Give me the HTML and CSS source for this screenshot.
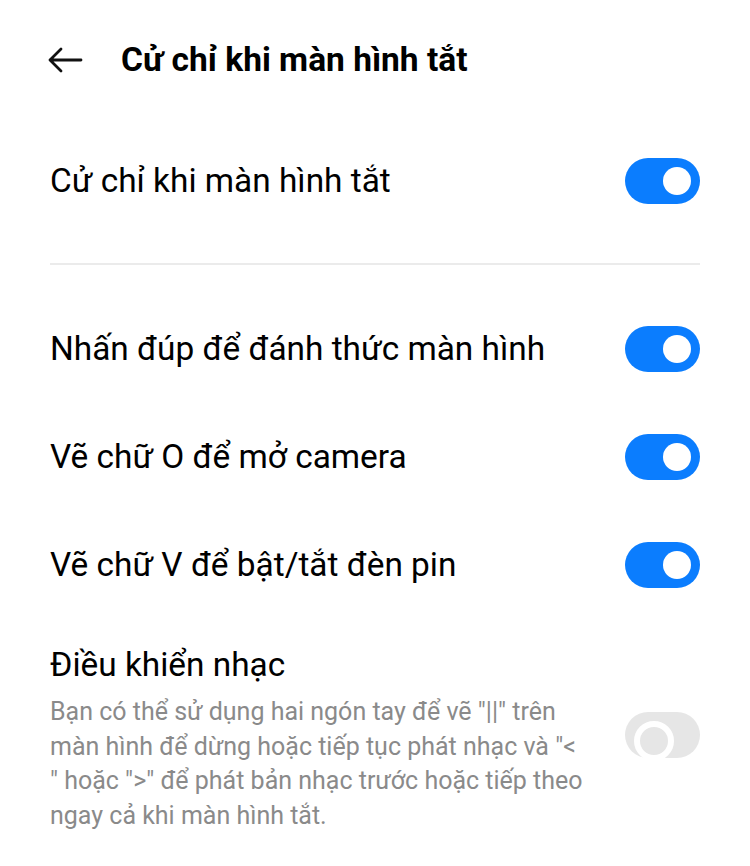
FILE: index.html
```html
<!DOCTYPE html>
<html lang="vi">
  <head>
    <meta charset="utf-8">
    <title>Cử chỉ khi màn hình tắt</title>
    <link rel="stylesheet" href="styles.css">
  </head>
  <body>
    <div class="header">
      <a href="javascript:void(0)" class="back">
        <svg width="36" height="26" viewBox="0 0 36 26">
          <path d="M34 13H3M14 2L3 13l11 11" fill="none" stroke="#111" stroke-width="2.8" stroke-linecap="round" stroke-linejoin="round"/>
        </svg>
      </a>
      <h1>Cử chỉ khi màn hình tắt</h1>
    </div>

    <div class="row row-main">
      <span class="label">Cử chỉ khi màn hình tắt</span>
      <span class="switch on"></span>
    </div>

    <div class="line"></div>

    <ul class="list">
      <li class="row">
        <span class="label">Nhấn đúp để đánh thức màn hình</span>
        <span class="switch on"></span>
      </li>
      <li class="row">
        <span class="label">Vẽ chữ O để mở camera</span>
        <span class="switch on"></span>
      </li>
      <li class="row">
        <span class="label">Vẽ chữ V để bật/tắt đèn pin</span>
        <span class="switch on"></span>
      </li>
    </ul>

    <div class="music">
      <div class="music-text">
        <div class="label">Điều khiển nhạc</div>
        <p class="desc">Bạn có thể sử dụng hai ngón tay để vẽ "||" trên<br>màn hình để dừng hoặc tiếp tục phát nhạc và "&lt;<br>" hoặc "&gt;" để phát bản nhạc trước hoặc tiếp theo<br>ngay cả khi màn hình tắt.</p>
      </div>
      <span class="switch off"></span>
    </div>
  </body>
</html>
```

FILE: styles.css
```css
*{margin: 0;padding: 0;box-sizing: border-box;}
ul {list-style: none;}
body {
  background: #fff;
  color: #000;
  font-family: Roboto, "Noto Sans", sans-serif;
}

.header {
  height: 120px;
  display: flex;
  align-items: center;
  padding-left: 47px;
}
.back {display: flex;width: 74px;}
.header h1 {font-size: 33.5px;font-weight: bold;line-height: 40px;}

.row {
  height: 108px;
  padding: 0 50px;
  display: flex;
  align-items: center;
  justify-content: space-between;
}
.row-main {margin-top: 7px;}
.label {font-size: 33.4px;line-height: 40px;}

.line {height: 2px;background: #ebebeb;margin: 28px 50px 30px;}

/* toggle switch */
.switch {
  position: relative;
  width: 75px;
  height: 46px;
  border-radius: 23px;
  flex-shrink: 0;
}
.switch:after {
  content: "";
  position: absolute;
  top: 9px;
  width: 28px;
  height: 28px;
  border-radius: 50%;
}
.switch.on {background: #0b7dfe;}
.switch.on:after {right: 9px;background: #fff;}
.switch.off {background: #e6e6e6;margin-top: 67px;}
.switch.off:after {left: 9px;background: #e6e6e6;border: 6px solid #fff;}

.music {
  display: flex;
  justify-content: space-between;
  align-items: flex-start;
  padding: 26px 50px 0;
}
.desc {
  margin-top: 10px;
  font-size: 25px;
  line-height: 34.5px;
  color: #8a8a8a;
}
```
